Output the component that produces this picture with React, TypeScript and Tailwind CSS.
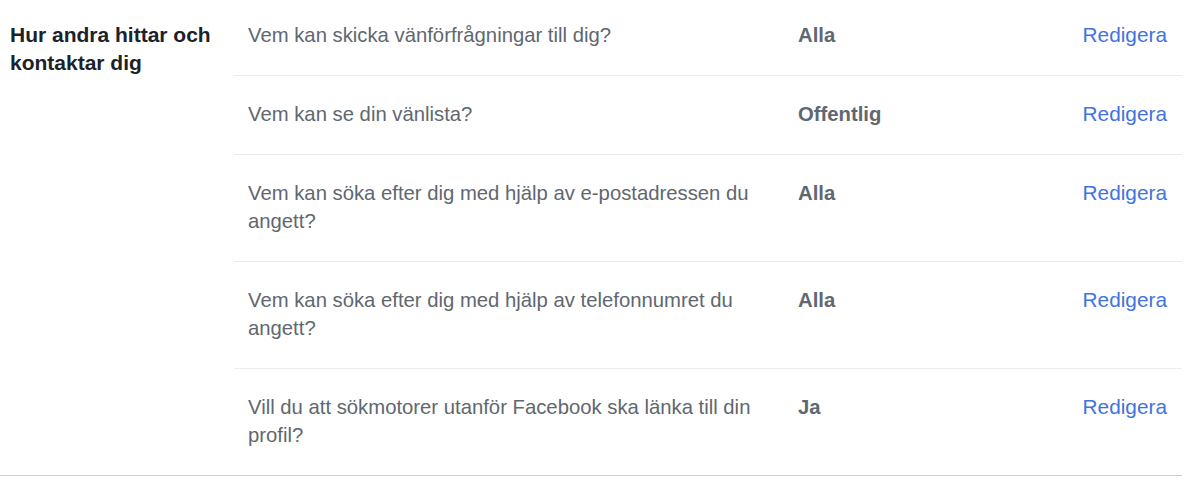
import React from "react";

const rows: { q: string; v: string }[] = [
  { q: "Vem kan skicka vänförfrågningar till dig?", v: "Alla" },
  { q: "Vem kan se din vänlista?", v: "Offentlig" },
  { q: "Vem kan söka efter dig med hjälp av e-postadressen du angett?", v: "Alla" },
  { q: "Vem kan söka efter dig med hjälp av telefonnumret du angett?", v: "Alla" },
  { q: "Vill du att sökmotorer utanför Facebook ska länka till din profil?", v: "Ja" },
];

export default function App() {
  return (
    <div className="w-[1199px] h-[482px] bg-white overflow-hidden" style={{ fontFamily: '"Liberation Sans", Arial, sans-serif' }}>
      <div className="w-[1182px] -mt-[3px] flex border-b border-[#ccd0d5] text-[20.3px] leading-[28px]">
        <div className="w-[234px] shrink-0 pl-[10px] pt-[24px] font-bold text-[21px] text-[#1d2129]">
          Hur andra hittar och
          <br />
          kontaktar dig
        </div>
        <div className="flex-1 flex flex-col">
          {rows.map((r, i) => (
            <div
              key={i}
              className={`flex pl-[14px] pr-[15px] pt-[24px] pb-[26px] ${i < rows.length - 1 ? "border-b border-[#e9ebee]" : ""}`}
            >
              <div className="w-[550px] shrink-0 pr-[40px] text-[#606770]">{r.q}</div>
              <div className="flex-1 font-bold text-[#606770]">{r.v}</div>
              <div className="text-[20.8px] text-[#4273e0]">Redigera</div>
            </div>
          ))}
        </div>
      </div>
    </div>
  );
}
